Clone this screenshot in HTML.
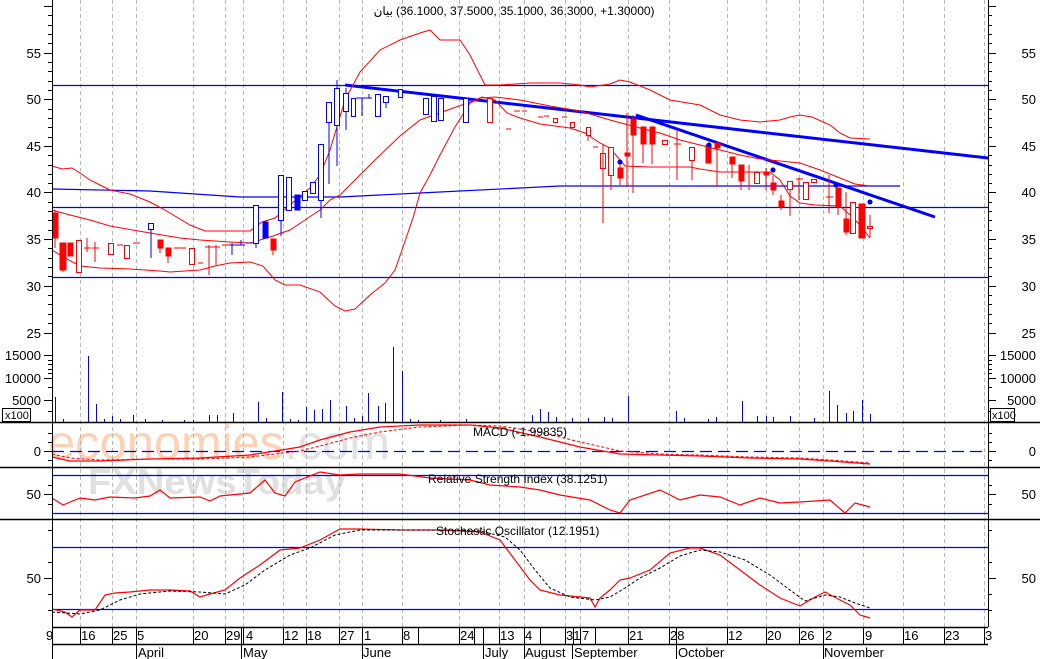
<!DOCTYPE html>
<html><head><meta charset="utf-8"><style>
html,body{margin:0;padding:0;background:#fff;}
svg{display:block;font-family:"Liberation Sans",Arial,sans-serif;}
</style></head><body>
<svg width="1040" height="659" viewBox="0 0 1040 659" xmlns="http://www.w3.org/2000/svg">
<rect width="1040" height="659" fill="#fff"/>
<!-- watermark -->
<text x="48" y="459" font-size="48" fill="#fcd2b5" textLength="342" lengthAdjust="spacingAndGlyphs" font-family="Liberation Sans,sans-serif">economies<tspan fill="#e2e2e2">.com</tspan></text>
<text x="88" y="494" font-size="36" font-weight="bold" fill="#e0e0e0" textLength="258" lengthAdjust="spacingAndGlyphs" font-family="Liberation Sans,sans-serif">FXNewsToday</text>
<!-- vertical dashed grid -->
<g stroke="#b8b8b8" stroke-dasharray="4,3" stroke-width="1">
<path d="M80.5 0V627M112.5 0V627M136.5 0V627M193.5 0V627M225.5 0V627M243.5 0V627M283.5 0V627M306.5 0V627M339.5 0V627M362.5 0V627M402.5 0V627M459.5 0V627M499.5 0V627M524.5 0V627M565.5 0V627M580.5 0V627M628.5 0V627M669.5 0V627M727.5 0V627M766.5 0V627M799.5 0V627M823.5 0V627M863.5 0V627M903.5 0V627M944.5 0V627M984.5 0V627"/>
</g>
<!-- title -->
<text x="393" y="15" font-size="12" text-anchor="end" fill="#000" font-family="'DejaVu Sans',sans-serif">بیان</text>
<text x="396" y="15" font-size="12" fill="#000">(36.1000, 37.5000, 35.1000, 36.3000, +1.30000)</text>
<!-- horizontal blue lines -->
<g stroke="#0000ff" stroke-width="1.2" fill="none">
<path d="M52 85.5H988M52 207.5H988M52 277.5H988"/>
<polyline points="52,189 150,191 240,197 340,197 420,193 560,186 900,186"/>
</g>
<!-- trend lines -->
<g stroke="#0000ff" stroke-width="3" fill="none">
<line x1="345" y1="85" x2="988" y2="158"/>
<line x1="636" y1="115" x2="935" y2="217"/>
</g>
<!-- bollinger -->
<g stroke="#ff0000" stroke-width="1" fill="none">
<polyline points="52,166 62,169 72,168 80,173 90,180 100,185 110,190 130,194 150,202 165,210 190,225 205,231 250,231 262,222 275,218 290,205 310,188 320,175 330,150 345,100 360,72 380,50 400,40 420,33 430,30 440,40 460,40 470,55 485,85 500,85 530,83 560,83 580,85 590,87 610,84 620,80 630,82 650,90 670,100 700,105 720,115 740,120 760,122 780,120 790,117 800,115 812,117 830,125 840,133 850,138 870,139"/>
<polyline points="52,210 70,215 90,220 110,226 150,233 180,238 200,240 230,242 250,243 260,240 270,237 290,230 305,220 320,210 330,200 340,195 355,180 375,160 400,136 420,120 445,111 470,102 480,98 495,97 520,100 550,106 580,111 610,120 640,128 660,133 680,140 700,145 720,150 740,155 760,159 780,161 800,163 820,170 840,178 855,184 870,186"/>
<polyline points="52,250 65,258 80,266 100,268 130,269 160,271 170,272 200,270 215,266 230,263 250,262 263,266 275,280 285,285 300,285 320,292 335,306 345,311 355,309 370,295 385,283 395,270 402,250 413,218 420,193 430,175 440,155 455,127 470,103 482,97 495,100 507,113 520,118 540,124 570,128 585,133 600,143 610,148 620,160 625,166 650,167 690,167 700,169 720,172 770,172 780,180 790,196 800,203 815,205 840,206 850,215 860,225 870,238"/>
</g>
<!-- candles -->
<g stroke-width="1" shape-rendering="crispEdges">
<g stroke="#ff0000" fill="#ff0000">
<line x1="55" y1="210" x2="55" y2="248"/><rect x="53" y="213" width="5" height="25"/>
<line x1="63" y1="243" x2="63" y2="272"/><rect x="60" y="243" width="6" height="27"/>
<rect x="68" y="243" width="5" height="13"/>
<line x1="87" y1="238" x2="87" y2="252"/><line x1="84" y1="248" x2="91" y2="248"/>
<line x1="95" y1="242" x2="95" y2="262"/><line x1="92" y1="248" x2="99" y2="248"/>
<line x1="117" y1="245" x2="123" y2="245"/>
<line x1="133" y1="243" x2="140" y2="243"/>
<rect x="158" y="240" width="5" height="8"/><line x1="160" y1="240" x2="160" y2="253"/>
<rect x="166" y="248" width="5" height="8"/><line x1="168" y1="248" x2="168" y2="263"/>
<line x1="174" y1="248" x2="186" y2="248"/>
<line x1="198" y1="263" x2="203" y2="263"/>
<line x1="209" y1="245" x2="209" y2="275"/><line x1="205" y1="247" x2="214" y2="247"/>
<line x1="216" y1="245" x2="216" y2="265"/><line x1="213" y1="247" x2="220" y2="247"/>
<line x1="222" y1="245" x2="230" y2="245"/>
<rect x="271" y="239" width="5" height="11"/><line x1="273" y1="239" x2="273" y2="255"/>
<rect x="631" y="119" width="5" height="16"/><line x1="633" y1="115" x2="633" y2="193"/>
<rect x="641" y="127" width="5" height="17"/><line x1="643" y1="127" x2="643" y2="163"/>
<rect x="650" y="127" width="5" height="17"/><line x1="652" y1="127" x2="652" y2="164"/>
<rect x="618" y="168" width="5" height="10"/><line x1="620" y1="162" x2="620" y2="185"/>
<line x1="627" y1="113" x2="627" y2="187"/><rect x="625" y="153" width="5" height="3"/>
<line x1="677" y1="129" x2="677" y2="180"/><line x1="674" y1="144" x2="681" y2="144"/>
<rect x="706" y="145" width="5" height="18"/>
<rect x="715" y="143" width="5" height="5"/><line x1="717" y1="143" x2="717" y2="187"/>
<rect x="730" y="157" width="5" height="7"/><line x1="732" y1="157" x2="732" y2="178"/>
<rect x="739" y="165" width="5" height="16"/><line x1="741" y1="165" x2="741" y2="190"/>
<line x1="749" y1="165" x2="749" y2="190"/><line x1="746" y1="172" x2="752" y2="172"/>
<rect x="764" y="172" width="5" height="3"/><line x1="766" y1="168" x2="766" y2="190"/>
<rect x="771" y="183" width="5" height="7"/><line x1="773" y1="176" x2="773" y2="195"/>
<rect x="779" y="201" width="5" height="6"/><line x1="781" y1="195" x2="781" y2="210"/>
<line x1="799" y1="178" x2="799" y2="200"/><line x1="796" y1="179" x2="803" y2="179"/>
<line x1="829" y1="175" x2="829" y2="213"/><line x1="826" y1="197" x2="833" y2="197"/>
<rect x="836" y="188" width="5" height="19"/><line x1="838" y1="188" x2="838" y2="215"/>
<rect x="844" y="219" width="5" height="13"/><line x1="846" y1="192" x2="846" y2="235"/>
<rect x="859" y="204" width="6" height="34"/>
<line x1="506" y1="129" x2="511" y2="129"/><line x1="514" y1="111" x2="520" y2="111"/><line x1="522" y1="111" x2="527" y2="111"/><line x1="538" y1="117" x2="543" y2="117"/><line x1="544" y1="116" x2="549" y2="116"/><line x1="593" y1="147" x2="598" y2="147"/><line x1="562" y1="117" x2="567" y2="117"/>
</g>
<g stroke="#ff0000" fill="#fff">
<rect x="76.5" y="240.5" width="5" height="32"/>
<rect x="108.5" y="243.5" width="5" height="11"/>
<rect x="124.5" y="245.5" width="5" height="13"/>
<rect x="189.5" y="248.5" width="5" height="16"/>
<rect x="487.5" y="98.5" width="5" height="24"/>
<rect x="553.5" y="118.5" width="4" height="4"/>
<rect x="570.5" y="122.5" width="4" height="5"/>
<rect x="586.5" y="127.5" width="4" height="8"/><line x1="588" y1="136" x2="588" y2="141"/>
<rect x="600.5" y="153.5" width="5" height="15"/><line x1="603" y1="145" x2="603" y2="223"/>
<rect x="608.5" y="147.5" width="5" height="28"/><line x1="611" y1="176" x2="611" y2="190"/>
<rect x="662.5" y="140.5" width="5" height="4"/>
<rect x="689.5" y="147.5" width="5" height="13"/><line x1="692" y1="161" x2="692" y2="180"/>
<rect x="754.5" y="172.5" width="5" height="11"/>
<rect x="787.5" y="181.5" width="5" height="8"/><line x1="790" y1="190" x2="790" y2="216"/>
<rect x="803.5" y="182.5" width="5" height="17"/>
<rect x="811.5" y="179.5" width="5" height="3"/>
<rect x="850.5" y="202.5" width="5" height="31"/>
<rect x="867.5" y="226.5" width="5" height="2"/><line x1="870" y1="215" x2="870" y2="226"/><line x1="870" y1="229" x2="870" y2="237"/>
</g>
<g stroke="#0000ff" fill="#0000ff">
<rect x="263" y="222" width="5" height="16"/>
<rect x="295" y="195" width="5" height="15"/>
<line x1="232" y1="243" x2="232" y2="255"/><line x1="229" y1="245" x2="236" y2="245"/>
<line x1="241" y1="240" x2="241" y2="245"/><line x1="236" y1="245" x2="245" y2="245"/>
<line x1="246" y1="243" x2="252" y2="243"/>
<line x1="346" y1="88" x2="346" y2="130"/>
<line x1="396" y1="92" x2="402" y2="92"/>
<circle cx="620" cy="162" r="2.5" stroke="none"/>
<circle cx="709" cy="145" r="2.5" stroke="none"/>
<circle cx="773" cy="170" r="2.5" stroke="none"/>
<circle cx="836" cy="185" r="2.5" stroke="none"/>
<circle cx="870" cy="202" r="2.5" stroke="none"/>
</g>
<g stroke="#0000ff" fill="#fff">
<rect x="148.5" y="223.5" width="5" height="6"/><line x1="151" y1="230" x2="151" y2="258"/>
<rect x="253.5" y="205.5" width="5" height="38"/><line x1="256" y1="244" x2="256" y2="248"/>
<rect x="278.5" y="175.5" width="5" height="45"/><line x1="281" y1="221" x2="281" y2="236"/>
<rect x="286.5" y="177.5" width="5" height="33"/>
<rect x="302.5" y="191.5" width="5" height="9"/>
<rect x="310.5" y="182.5" width="5" height="11"/>
<rect x="318.5" y="144.5" width="5" height="56"/><line x1="321" y1="201" x2="321" y2="218"/>
<rect x="326.5" y="102.5" width="5" height="20"/><line x1="329" y1="123" x2="329" y2="184"/>
<rect x="334.5" y="88.5" width="5" height="37"/><line x1="337" y1="80" x2="337" y2="88"/><line x1="337" y1="126" x2="337" y2="166"/>
<rect x="343.5" y="93.5" width="5" height="18"/>
<rect x="351.5" y="98.5" width="4" height="18"/>
<line x1="362" y1="98" x2="362" y2="116"/><line x1="356" y1="98" x2="368" y2="98"/>
<line x1="369" y1="94" x2="369" y2="98"/><line x1="366" y1="98" x2="372" y2="98"/>
<rect x="375.5" y="94.5" width="5" height="22"/>
<rect x="383.5" y="96.5" width="5" height="6"/><line x1="386" y1="103" x2="386" y2="108"/>
<rect x="398.5" y="89.5" width="4" height="8"/>
<rect x="423.5" y="98.5" width="5" height="16"/>
<rect x="431.5" y="96.5" width="5" height="25"/>
<rect x="438.5" y="98.5" width="5" height="22"/>
<rect x="463.5" y="98.5" width="5" height="24"/>
</g>
</g>
<!-- volume -->
<g stroke="#0000ff" stroke-width="1" shape-rendering="crispEdges">
<path d="M55.5 397V422M63.5 419V422M88.5 356V422M96.5 404V422M104.5 419V422M112.5 416V422M120.5 419V422M133.5 415V422M145.5 419V422M162.5 420V422M184.5 420V422M193.5 420V422M209.5 415V422M217.5 415V422M233.5 413V422M258.5 402V422M266.5 418V422M282.5 392V422M290.5 419V422M298.5 420V422M306.5 407V422M314.5 410V422M322.5 409V422M330.5 400V422M346.5 406V422M354.5 418V422M362.5 416V422M368.5 393V422M378.5 406V422M385.5 403V422M393.5 347V422M402.5 371V422M410.5 419V422M418.5 420V422M440.5 420V422M466.5 419V422M532.5 415V422M540.5 409V422M548.5 412V422M556.5 417V422M572.5 418V422M588.5 418V422M604.5 417V422M612.5 418V422M628.5 396V422M676.5 411V422M684.5 418V422M708.5 419V422M716.5 417V422M742.5 401V422M757.5 416V422M766.5 416V422M773.5 417V422M790.5 416V422M814.5 418V422M829.5 391V422M837.5 405V422M846.5 413V422M853.5 411V422M862.5 400V422M870.5 414V422"/>
</g>
<!-- MACD -->
<line x1="52" y1="451.5" x2="988" y2="451.5" stroke="#0000ff" stroke-width="1.2" stroke-dasharray="12,6"/>
<polyline fill="none" stroke="#ff0000" stroke-width="1.2" points="52,457 70,461 100,461 150,459 200,458 250,455 300,447 320,440 350,432 380,427 420,425 470,425 500,428 540,437 580,447 620,454 660,455 700,456 750,458 800,459 830,461 870,464"/>
<polyline fill="none" stroke="#ff0000" stroke-width="1" stroke-dasharray="3,2" points="52,454 70,458 100,460 150,459 200,459 250,457 300,451 320,446 350,438 380,432 420,427 470,425 500,426 540,432 580,442 620,451 660,454 700,455 750,457 800,458 830,460 870,463"/>
<text x="473" y="436" font-size="12" fill="#000">MACD (-1.99835)</text>
<!-- RSI -->
<g stroke="#0000ff" stroke-width="1.2"><line x1="52" y1="475.5" x2="988" y2="475.5"/><line x1="52" y1="513.5" x2="988" y2="513.5"/></g>
<polyline fill="none" stroke="#ff0000" stroke-width="1.2" points="52,498 63,505 80,498 95,500 110,497 135,498 150,496 160,490 170,498 200,497 210,501 220,496 250,493 265,480 275,493 285,496 295,482 320,472 340,475 360,474 400,474 430,478 470,480 490,485 520,487 540,490 560,495 590,500 610,510 620,513 630,500 660,490 680,500 700,495 720,497 740,505 760,498 780,503 800,502 830,500 845,513 855,503 870,507"/>
<text x="428" y="483" font-size="12" fill="#000">Relative Strength Index (38.1251)</text>
<!-- Stochastic -->
<g stroke="#0000ff" stroke-width="1.2"><line x1="52" y1="547.5" x2="988" y2="547.5"/><line x1="52" y1="609.5" x2="988" y2="609.5"/></g>
<polyline fill="none" stroke="#ff0000" stroke-width="1.2" points="52,609 65,612 72,617 80,610 95,610 105,595 115,593 130,592 150,590 170,590 190,591 200,597 210,594 225,590 240,578 260,565 280,550 300,548 320,540 340,529 360,529 400,530 440,530 480,532 500,540 515,560 530,580 540,590 560,595 580,597 590,598 595,607 600,598 610,590 620,580 630,578 650,570 670,553 690,548 700,548 720,555 740,570 760,585 780,598 800,606 815,597 825,592 840,600 850,605 860,615 870,618"/>
<polyline fill="none" stroke="#000" stroke-width="1" stroke-dasharray="3,2" points="52,612 80,614 100,610 120,600 140,594 170,591 200,592 225,594 245,585 265,570 290,555 310,548 335,535 360,530 400,530 440,530 480,531 505,537 520,550 535,570 550,588 570,597 595,600 610,597 625,588 640,578 660,568 680,556 700,550 720,552 745,560 770,575 790,590 805,601 825,595 840,597 855,603 870,608"/>
<text x="436" y="535" font-size="12" fill="#000">Stochastic Oscillator (12.1951)</text>
<!-- panel separators -->
<g stroke="#000" stroke-width="1.4">
<line x1="0" y1="422.5" x2="1040" y2="422.5"/>
<line x1="0" y1="467.5" x2="1040" y2="467.5"/>
<line x1="0" y1="519.5" x2="1040" y2="519.5"/>
<line x1="52" y1="627.5" x2="988" y2="627.5"/>
<line x1="52" y1="644.5" x2="988" y2="644.5"/>
</g>
<!-- axes -->
<g stroke="#000" stroke-width="1">
<line x1="52.5" y1="0" x2="52.5" y2="659"/>
<line x1="988.5" y1="0" x2="988.5" y2="627"/>
</g>
<g stroke="#000" stroke-width="1" shape-rendering="crispEdges">
<path d="M44 6.5H52M48 15.5H52M48 25.5H52M48 34.5H52M48 43.5H52M44 53.5H52M48 62.5H52M48 71.5H52M48 81.5H52M48 90.5H52M44 99.5H52M48 109.5H52M48 118.5H52M48 127.5H52M48 137.5H52M44 146.5H52M48 155.5H52M48 165.5H52M48 174.5H52M48 183.5H52M44 192.5H52M48 202.5H52M48 211.5H52M48 220.5H52M48 230.5H52M44 239.5H52M48 248.5H52M48 258.5H52M48 267.5H52M48 276.5H52M44 286.5H52M48 295.5H52M48 304.5H52M48 314.5H52M48 323.5H52M44 333.5H52M44 355.5H52M48 360.5H52M48 364.5H52M48 369.5H52M48 373.5H52M44 378.5H52M48 387.5H52M44 400.5H52M48 411.5H52M44 451.5H52M48 433.5H52M48 442.5H52M48 460.5H52M44 494.5H52M48 485.5H52M48 504.5H52M44 578.5H52M48 530.5H52M48 562.5H52M48 594.5H52M48 610.5H52"/>
<path d="M988 6.5H996M988 15.5H992M988 25.5H992M988 34.5H992M988 43.5H992M988 53.5H996M988 62.5H992M988 71.5H992M988 81.5H992M988 90.5H992M988 99.5H996M988 109.5H992M988 118.5H992M988 127.5H992M988 137.5H992M988 146.5H996M988 155.5H992M988 165.5H992M988 174.5H992M988 183.5H992M988 192.5H996M988 202.5H992M988 211.5H992M988 220.5H992M988 230.5H992M988 239.5H996M988 248.5H992M988 258.5H992M988 267.5H992M988 276.5H992M988 286.5H996M988 295.5H992M988 304.5H992M988 314.5H992M988 323.5H992M988 333.5H996M988 355.5H996M988 360.5H992M988 364.5H992M988 369.5H992M988 373.5H992M988 378.5H996M988 387.5H992M988 400.5H996M988 411.5H992M988 451.5H996M988 433.5H992M988 442.5H992M988 460.5H992M988 494.5H996M988 485.5H992M988 504.5H992M988 578.5H996M988 530.5H992M988 562.5H992M988 594.5H992M988 610.5H992"/>
</g>
<g font-size="13" fill="#000" text-anchor="end">
<text x="41" y="58">55</text><text x="41" y="104">50</text><text x="41" y="151">45</text><text x="41" y="197">40</text><text x="41" y="244">35</text><text x="41" y="291">30</text><text x="41" y="338">25</text>
<text x="41" y="360">15000</text><text x="41" y="383">10000</text><text x="41" y="405">5000</text>
<text x="41" y="456">0</text><text x="41" y="499">50</text><text x="41" y="583">50</text>
</g>
<g font-size="13" fill="#000" text-anchor="end">
<text x="1036" y="58">55</text><text x="1036" y="104">50</text><text x="1036" y="151">45</text><text x="1036" y="197">40</text><text x="1036" y="244">35</text><text x="1036" y="291">30</text><text x="1036" y="338">25</text>
<text x="1036" y="360">15000</text><text x="1036" y="383">10000</text><text x="1036" y="405">5000</text>
<text x="1036" y="456">0</text><text x="1036" y="499">50</text><text x="1036" y="583">50</text>
</g>
<rect x="2.5" y="408.5" width="28" height="13" fill="#fff" stroke="#000"/>
<text x="5" y="419" font-size="11">x100</text>
<rect x="990.5" y="408.5" width="24" height="13" fill="#fff" stroke="#000"/>
<text x="992" y="419" font-size="11">x100</text>
<!-- date axis -->
<g stroke="#000" stroke-width="1" shape-rendering="crispEdges">
<path d="M80.5 627V644M112.5 627V644M136.5 627V644M193.5 627V644M225.5 627V644M241.5 627V644M243.5 627V644M283.5 627V644M306.5 627V644M339.5 627V644M362.5 627V644M402.5 627V644M418.5 627V644M459.5 627V644M474.5 627V644M483.5 627V644M499.5 627V644M524.5 627V644M540.5 627V644M565.5 627V644M573.5 627V644M580.5 627V644M595.5 627V644M628.5 627V644M669.5 627V644M676.5 627V644M727.5 627V644M766.5 627V644M799.5 627V644M823.5 627V644M863.5 627V644M903.5 627V644M944.5 627V644M984.5 627V644"/>
<path d="M136.5 644V659M241.5 644V659M362.5 644V659M483.5 644V659M524.5 644V659M572.5 644V659M676.5 644V659M823.5 644V659"/>
</g>
<g font-size="13" fill="#000">
<text x="46" y="640">9</text><text x="81" y="640">16</text><text x="113" y="640">25</text><text x="137" y="640">5</text><text x="194" y="640">20</text><text x="226" y="640">29</text><text x="246" y="640">4</text><text x="284" y="640">12</text><text x="307" y="640">18</text><text x="340" y="640">27</text><text x="364" y="640">1</text><text x="403" y="640">8</text><text x="460" y="640">24</text><text x="500" y="640">13</text><text x="525" y="640">4</text><text x="566" y="640">31</text><text x="582" y="640">7</text><text x="629" y="640">21</text><text x="670" y="640">28</text><text x="728" y="640">12</text><text x="767" y="640">20</text><text x="800" y="640">26</text><text x="825" y="640">2</text><text x="865" y="640">9</text><text x="904" y="640">16</text><text x="945" y="640">23</text><text x="985" y="640">3</text>
<text x="138" y="657">April</text><text x="243" y="657">May</text><text x="363" y="657">June</text><text x="485" y="657">July</text><text x="525" y="657">August</text><text x="574" y="657">September</text><text x="678" y="657">October</text><text x="824" y="657">November</text>
</g>
</svg>
</body></html>
